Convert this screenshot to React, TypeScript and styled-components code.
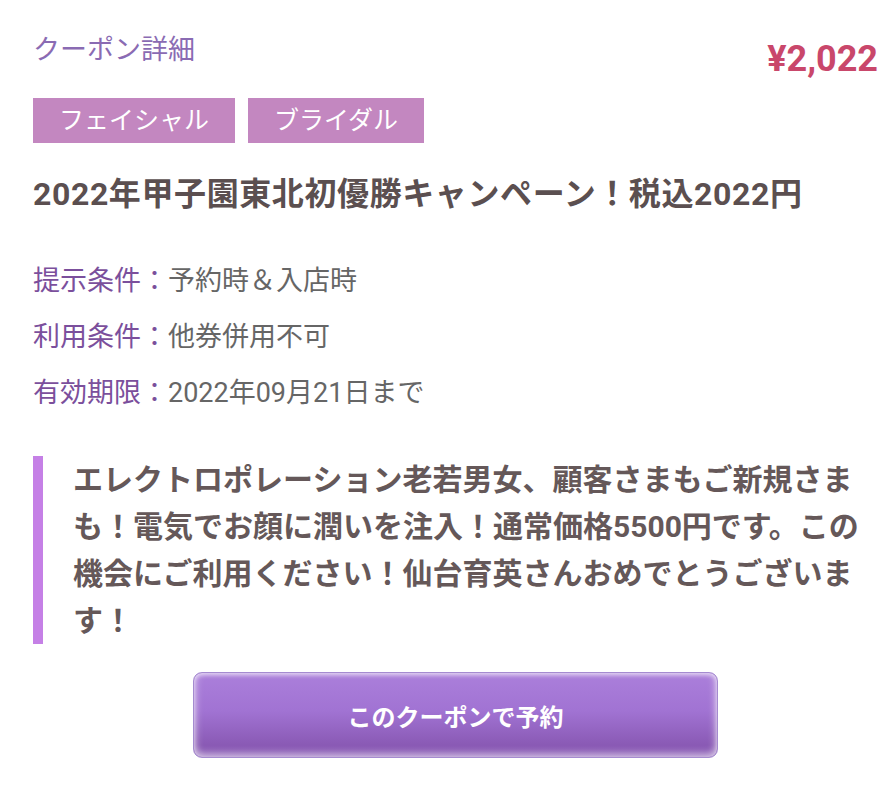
import React from "react";
import styled, { createGlobalStyle } from "styled-components";

const Global = createGlobalStyle`
  html, body { margin: 0; padding: 0; background: #ffffff; }
  body { font-family: Roboto, "Noto Sans CJK JP", sans-serif; }
`;

const Page = styled.div`
  width: 882px;
  box-sizing: border-box;
  padding: 28px 4px 40px 33px;
`;

const Header = styled.div`
  display: flex;
  justify-content: space-between;
  align-items: flex-start;
`;

const Heading = styled.h2`
  margin: 0;
  font-size: 27px;
  line-height: 44px;
  font-weight: 400;
  color: #8a6bb3;
`;

const Price = styled.div`
  margin-top: 9px;
  font-size: 36px;
  line-height: 44px;
  font-weight: 700;
  color: #c9476b;
`;

const Tags = styled.div`
  display: flex;
  gap: 13px;
  margin-top: 17px;
`;

const Tag = styled.span`
  display: inline-block;
  height: 45px;
  line-height: 45px;
  padding: 0 26px;
  background: #c387c0;
  color: #ffffff;
  font-size: 25px;
`;

const Title = styled.h1`
  margin: 31px 0 0;
  font-size: 32px;
  letter-spacing: 0.6px;
  line-height: 40px;
  font-weight: 700;
  color: #5b4f50;
`;

const InfoList = styled.dl`
  margin: 36px 0 0;
`;

const InfoRow = styled.div`
  display: flex;
  height: 56px;
  align-items: center;
  font-size: 27px;
`;

const Label = styled.dt`
  color: #7b4f9c;
`;

const Value = styled.dd`
  margin: 0;
  color: #666666;
`;

const Quote = styled.blockquote`
  margin: 38px 0 0;
  border-left: 10px solid #c580e6;
  padding: 0 0 0 30px;
  font-size: 30px;
  line-height: 47px;
  font-weight: 700;
  color: #655859;
`;

const ButtonRow = styled.div`
  display: flex;
  justify-content: center;
  margin-top: 28px;
`;

const ReserveButton = styled.button`
  width: 525px;
  height: 86px;
  border: 1px solid #a58bd0;
  border-radius: 9px;
  background: linear-gradient(#ab7fdb 0%, #a173d3 45%, #8a5ab5 85%, #8b5db6 100%);
  box-shadow: inset 0 2px 4px rgba(255, 255, 255, 0.55), inset 0 -5px 6px rgba(255, 255, 255, 0.35),
    inset 4px 0 6px rgba(255, 255, 255, 0.25), inset -4px 0 6px rgba(255, 255, 255, 0.25);
  color: #ffffff;
  font-family: Roboto, "Noto Sans CJK JP", sans-serif;
  font-size: 24px;
  font-weight: 700;
  cursor: pointer;
`;

const info = [
  { label: "提示条件：", value: "予約時＆入店時" },
  { label: "利用条件：", value: "他券併用不可" },
  { label: "有効期限：", value: "2022年09月21日まで" },
];

export default function App() {
  return (
    <Page>
      <Global />
      <Header>
        <Heading>クーポン詳細</Heading>
        <Price>¥2,022</Price>
      </Header>
      <Tags>
        <Tag>フェイシャル</Tag>
        <Tag>ブライダル</Tag>
      </Tags>
      <Title>2022年甲子園東北初優勝キャンペーン！税込2022円</Title>
      <InfoList>
        {info.map((r) => (
          <InfoRow key={r.label}>
            <Label>{r.label}</Label>
            <Value>{r.value}</Value>
          </InfoRow>
        ))}
      </InfoList>
      <Quote>
        エレクトロポレーション老若男女、顧客さまもご新規さまも！電気でお顔に潤いを注入！通常価格5500円です。この機会にご利用ください！仙台育英さんおめでとうございます！
      </Quote>
      <ButtonRow>
        <ReserveButton>このクーポンで予約</ReserveButton>
      </ButtonRow>
    </Page>
  );
}
